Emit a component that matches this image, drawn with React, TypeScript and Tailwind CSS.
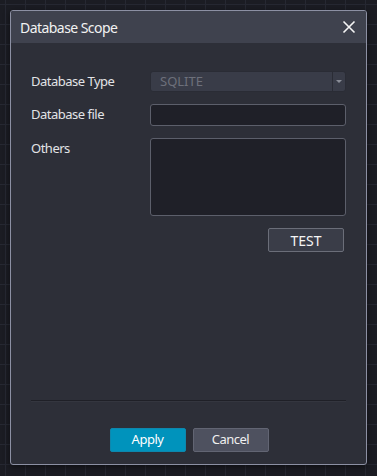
import React from 'react';

const App: React.FC = () => {
  return (
    <div
      className="w-[377px] h-[476px] overflow-hidden bg-[#1b1c23] bg-[linear-gradient(to_right,#262832_1px,transparent_1px),linear-gradient(to_bottom,#262832_1px,transparent_1px)] bg-[size:20px_20px] bg-[position:5px_4px] pt-[10px] pl-[10px]"
      style={{ fontFamily: '"Noto Sans", "Open Sans", sans-serif' }}
    >
      {/* Dialog */}
      <div className="w-[357px] h-[455px] flex flex-col rounded-[3px] border border-[#8c90a3] bg-[#2d2f38] overflow-hidden shadow-[0_2px_6px_rgba(0,0,0,0.5)]">
        {/* Header */}
        <div className="h-[32px] shrink-0 flex items-center justify-between bg-[#3f424e] pl-[9px] pr-[9px]">
          <span className="text-[14px] tracking-[-0.55px] text-[#f2f2f2]">Database Scope</span>
          <svg width="14" height="14" viewBox="0 0 14 14" className="mr-[1px]">
            <path d="M1.5 1.5 L12.5 12.5 M12.5 1.5 L1.5 12.5" stroke="#f5f5f5" strokeWidth="1.6" />
          </svg>
        </div>

        {/* Body */}
        <div className="flex-1 flex flex-col pl-[20px] pr-[20px] text-[13px] tracking-[-0.5px]">
          <div className="mt-[28px] flex items-center">
            <span className="w-[119px] text-[#e2e3e6]">Database Type</span>
            <div className="w-[196px] h-[21px] flex rounded-[3px] border border-[#2a2c35] bg-[#393c48]">
              <span className="flex-1 pl-[9px] leading-[19px] tracking-normal text-[#6d707b]">SQLITE</span>
              <div className="w-[13px] border-l border-[#2a2c35] flex items-center justify-center">
                <svg width="6" height="4" viewBox="0 0 6 4">
                  <path d="M0 0 L6 0 L3 3 Z" fill="#8a8d97" />
                </svg>
              </div>
            </div>
          </div>

          <div className="mt-[12px] flex items-center">
            <span className="w-[119px] text-[#e2e3e6]">Database file</span>
            <div className="w-[196px] h-[22px] rounded-[3px] border border-[#5c5f6b] bg-[#1f2028]" />
          </div>

          <div className="mt-[12px] flex items-start">
            <span className="w-[119px] text-[#e2e3e6] mt-[1px]">Others</span>
            <div className="w-[196px] h-[78px] rounded-[3px] border border-[#5c5f6b] bg-[#1f2028]" />
          </div>

          <div className="mt-[12px] flex justify-end pr-[2px]">
            <div className="w-[76px] h-[24px] flex items-center justify-center rounded-[2px] border border-[#6b6e79] bg-[#3a3d48] text-[14px] tracking-normal text-[#f5f5f5]">
              TEST
            </div>
          </div>

          <div className="flex-1" />

          <div className="h-[2px] bg-[#1f2027] border-b border-[#34363f]" />

          <div className="mt-[26px] mb-[12px] flex justify-center gap-[7px] pl-[1px]">
            <div className="w-[76px] h-[24px] flex items-center justify-center rounded-[2px] border border-[#0e87ad] bg-[#0093bc] text-white">
              Apply
            </div>
            <div className="w-[76px] h-[24px] flex items-center justify-center rounded-[2px] border border-[#626573] bg-[#4e515f] text-[#f0f0f0]">
              Cancel
            </div>
          </div>
        </div>
      </div>
    </div>
  );
};

export default App;
